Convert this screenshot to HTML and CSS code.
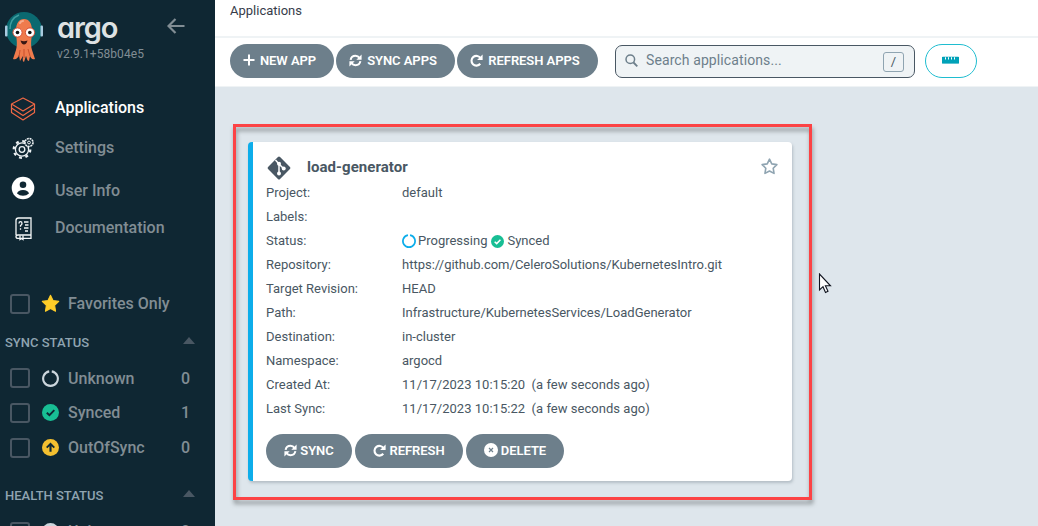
FILE: index.html
```html
<!DOCTYPE html>
<html lang="en">
<head>
<meta charset="utf-8">
<title>Applications - Argo CD</title>
<link rel="stylesheet" href="styles.css">
</head>
<body>
<svg class="defs" width="0" height="0">
  <symbol id="sync" viewBox="0 0 16 16"><g fill="none" stroke="currentColor" stroke-width="2.500"><path d="M2 7.2C2.6 3.8 5 2.2 8 2.2c2.200 0 3.800 1 5 2.700"/><path d="M14 8.800c-.6 3.400-3 5-6 5-2.200 0-3.800-1-5-2.700"/></g><path fill="currentColor" d="M15.500.5v6.500H9zM.5 15.500V9H7z"/></symbol>
  <symbol id="redo" viewBox="0 0 16 16"><path fill="none" stroke="currentColor" stroke-width="2.600" d="M13 5.200A6 6 0 1 0 12.600 12"/><path fill="currentColor" d="M15.500.5v6.800H8.700z"/></symbol>
  <symbol id="check" viewBox="0 0 16 16"><circle cx="8" cy="8" r="8" fill="#18be94"/><path d="M4.500 8.200 7 10.600l4.600-4.800" fill="none" stroke="currentColor" stroke-width="1.800"/></symbol>
  <symbol id="ring" viewBox="0 0 16 16"><path d="M9.200 1.300a6.900 6.900 0 1 1-2.400 0" fill="none" stroke="currentColor" stroke-width="2"/></symbol>
  <symbol id="star" viewBox="0 0 18 18"><path d="M9 1.200l2.400 5 5.400.8-3.900 3.800.9 5.500L9 13.700l-4.800 2.600.9-5.500L1.200 7l5.400-.8z" stroke="currentColor" stroke-linejoin="round"/></symbol>
</svg>
<div class="app">
  <aside class="sidebar">
    <div class="brand">
      <svg class="mascot" width="40" height="52" viewBox="0 0 40 52">
        <circle cx="20" cy="19" r="18" fill="#0b6970"/>
        <rect x="1" y="14.500" width="2.500" height="11" rx="1" fill="#a9cbe0"/><rect x="36.500" y="14.500" width="2.500" height="11" rx="1" fill="#a9cbe0"/>
        <path d="M6 18C6 10 10 6 15 4" fill="none" stroke="#3f9da0" stroke-width="1.500"/>
        <path d="M12 39C14 32 12 27 12 20c0-8 3-12 8-12s8 4 8 12c0 7-2 12 0 19l3 9c-3 1-4-1-5-3l-1 5c-2 0-2-3-3-5l-2 6c-2-1-1-4-1-6l-3 5-1-6c-1 3-3 5-6 4z" fill="#ef7b4d"/>
        <path d="M16 39l-1 7M20 38v9M24 38l2 7" stroke="#c94f2d" fill="none"/>
        <path d="M16 12q1-2 3-2" stroke="#f8ac8c" stroke-width="2" stroke-linecap="round" fill="none"/>
        <circle cx="13.500" cy="21.500" r="4.600" fill="#fff" stroke="#d94e34"/><circle cx="26" cy="21.500" r="4.600" fill="#fff" stroke="#d94e34"/>
        <circle cx="13.500" cy="21.500" r="1.800" fill="#111"/><circle cx="25.800" cy="21.500" r="1.800" fill="#111"/>
        <path d="M16.500 29.500q3.500 1.500 7 0-1 4-3.500 4t-3.500-4z" fill="#391613"/>
      </svg>
      <div class="names"><div class="logo">argo</div><div class="version">v2.9.1+58b04e5</div></div>
      <svg class="back" width="18" height="16" viewBox="0 0 18 16"><path d="M8.500 1 1.500 8l7 7M2 8h15.500" fill="none" stroke="currentColor" stroke-width="2.200"/></svg>
    </div>
    <nav class="nav">
      <a class="item active"><svg width="26" height="26" viewBox="0 0 26 26"><g fill="none" stroke="#ef6845" stroke-width="1.200" stroke-linejoin="round"><path d="M13 3 24.500 9 13 16 1.500 9z"/><path d="M1.500 9v4L13 20.500 24.500 13V9"/><path d="M1.500 13v4.500L13 25l11.500-7.500V13"/></g></svg><span>Applications</span></a>
      <a class="item settings"><svg width="26" height="26" viewBox="0 0 26 26"><g fill="none" stroke="#eef3f5"><circle cx="12" cy="14.500" r="6.600" stroke-width="1.300"/><circle cx="12" cy="14.500" r="8.300" stroke-width="2.200" stroke-dasharray="2.900 3.620"/><circle cx="12" cy="14.500" r="2.800" stroke-width="1.300"/><circle cx="19" cy="7.500" r="4" fill="#0f2733" stroke-width="1.600" stroke-dasharray="2 .7"/><circle cx="19" cy="7.500" r="1.400"/></g></svg><span>Settings</span></a>
      <a class="item user"><svg width="26" height="26" viewBox="0 0 26 26"><circle cx="13" cy="13" r="11.300" fill="#fff"/><circle cx="13" cy="9.800" r="3.300" fill="#0f2733"/><path d="M7 18.500q1-3.600 6-3.600t6 3.600q-2.500 2.300-6 2.300t-6-2.300z" fill="#0f2733"/></svg><span>User Info</span></a>
      <a class="item docs"><svg width="26" height="26" viewBox="0 0 26 26"><g fill="none" stroke="#f4f7f8" stroke-width="1.300"><path d="M6 20V5.500Q6 3 8.500 3H21v17H8q-2 0-2 1.700t2 1.700h13V20"/><path d="M14 7h4.500M15 10h3.500M14 13h4.500M15 16h3"/><path d="M9 8.500q0-1.800 1.500-1.800T12 8.500q0 1.200-1.500 2v1.300M10.500 13.300v1.400"/><path d="M10 20.500v4l1.500-1 1.500 1v-4"/></g></svg><span>Documentation</span></a>
    </nav>
    <div class="filters">
      <label class="filter"><i class="box"></i><svg class="gold" width="19" height="19"><use href="#star" fill="#ffcd28"/></svg><span>Favorites Only</span></label>
      <div class="heading sync">SYNC STATUS<i class="caret"></i></div>
      <label class="filter unknown"><i class="box"></i><svg class="pale" width="17" height="17"><use href="#ring"/></svg><span>Unknown</span><b>0</b></label>
      <label class="filter"><i class="box"></i><svg class="dark" width="17" height="17"><use href="#check"/></svg><span>Synced</span><b>1</b></label>
      <label class="filter"><i class="box"></i><svg width="17" height="17" viewBox="0 0 16 16"><circle cx="8" cy="8" r="8" fill="#f4c030"/><path d="M8 3.200 12.200 7.500 11 8.700 9 6.800V12H7V6.800L5 8.700 3.800 7.500z" fill="#0f2733"/></svg><span>OutOfSync</span><b>0</b></label>
      <div class="heading health">HEALTH STATUS<i class="caret"></i></div>
      <label class="filter last"><i class="box"></i><svg width="17" height="17" viewBox="0 0 16 16"><circle cx="8" cy="8" r="8" fill="#ccd6dd"/></svg><span>Unknown</span><b>0</b></label>
    </div>
  </aside>
  <main class="main">
    <header class="crumbs">Applications</header>
    <div class="toolbar">
      <button class="btn new"><svg width="12" height="12" viewBox="0 0 12 12"><path d="M6 .5v11M.5 6h11" stroke="currentColor" stroke-width="2"/></svg>NEW APP</button>
      <button class="btn syncs"><svg width="13" height="13"><use href="#sync"/></svg>SYNC APPS</button>
      <button class="btn refreshes"><svg width="13" height="13"><use href="#redo"/></svg>REFRESH APPS</button>
      <div class="search"><svg width="13" height="13" viewBox="0 0 13 13"><path d="M8.500 8.500 12.300 12.300" stroke="currentColor" stroke-width="1.800"/><circle cx="5.300" cy="5.300" r="4.300" fill="none" stroke="currentColor" stroke-width="1.500"/></svg><span>Search applications...</span><kbd>/</kbd></div>
      <button class="ruler"><svg width="17" height="8" viewBox="0 0 17 8"><path d="M0 1h3v2.500h1V1h2v2.500h1V1h2v2.500h1V1h2v2.500h1V1h4v6.500H0z" fill="#00a2b8"/><path d="M.5 1h16v6H.5z" fill="none" stroke="#00a2b8" stroke-opacity=".5"/></svg></button>
    </div>
    <section class="canvas">
      <article class="card">
        <div class="title"><svg width="26" height="26" viewBox="0 0 26 26"><rect x="4.500" y="4.500" width="17" height="17" rx="1.500" transform="rotate(45 13 13)" fill="#495763"/><path d="M9.500 5l3.500 4v9M13 9l5 5" stroke="#fff" stroke-width="1.500" fill="none"/><circle cx="13" cy="8.800" r="2" fill="#fff"/><circle cx="13" cy="18.500" r="2" fill="#fff"/><circle cx="17.700" cy="13.500" r="2" fill="#fff"/></svg><h1>load-generator</h1><svg class="fav" width="17" height="17" viewBox="0 0 18 18"><use href="#star" width="18" height="18" fill="none" stroke-width="1.700"/></svg></div>
        <dl class="details">
          <dt>Project:</dt><dd>default</dd>
          <dt>Labels:</dt><dd></dd>
          <dt>Status:</dt><dd class="status"><svg class="blue" width="14" height="14"><use href="#ring"/></svg><span>Progressing</span><svg class="light" width="13" height="13"><use href="#check"/></svg><span>Synced</span></dd>
          <dt>Repository:</dt><dd>https://github.com/CeleroSolutions/KubernetesIntro.git</dd>
          <dt>Target Revision:</dt><dd>HEAD</dd>
          <dt>Path:</dt><dd>Infrastructure/KubernetesServices/LoadGenerator</dd>
          <dt>Destination:</dt><dd>in-cluster</dd>
          <dt>Namespace:</dt><dd>argocd</dd>
          <dt>Created At:</dt><dd class="time">11/17/2023 10:15:20 &nbsp;(a few seconds ago)</dd>
          <dt>Last Sync:</dt><dd class="time">11/17/2023 10:15:22 &nbsp;(a few seconds ago)</dd>
        </dl>
        <div class="actions">
          <button class="btn s"><svg width="13" height="13"><use href="#sync"/></svg>SYNC</button>
          <button class="btn r"><svg width="13" height="13"><use href="#redo"/></svg>REFRESH</button>
          <button class="btn d"><svg width="14" height="14" viewBox="0 0 14 14"><circle cx="7" cy="7" r="7" fill="#fff"/><path d="M5 5l4 4M9 5 5 9" stroke="#6d7f8b" stroke-width="1.200"/></svg>DELETE</button>
        </div>
      </article>
    </section>
  </main>
  <div class="highlight"></div>
  <svg class="cursor" width="14" height="21" viewBox="0 0 14 21"><path d="M1.500 1v16l3.500-3.300L7.500 19.500l2.500-1.300-2.600-5.400H12.500z" fill="#fff" stroke="#10141f" stroke-width="1.100"/></svg>
</div>
</body>
</html>
```

FILE: styles.css
```css
* { box-sizing: border-box; }
body { margin: 0; font-family: Roboto, sans-serif; font-size: 13px; color: #495763; }
svg { flex: none; display: block; }
.defs { position: absolute; }
.app { position: relative; display: flex; width: 1038px; height: 526px; overflow: hidden; }

.sidebar { width: 215px; flex: none; background: #0f2733; color: #818d94; overflow: hidden; }
.brand { height: 88px; display: flex; align-items: flex-start; padding: 11px 0 0 4px; }
.names { width: 104px; margin-left: 13px; }
.logo { height: 36px; font: 600 29px/34px Inter, sans-serif; font-feature-settings: "cv11"; color: #dee2e3; letter-spacing: -1.1px; }
.version { font-size: 12px; line-height: 14px; letter-spacing: .07px; }
.back { margin: 7px 0 0 6px; }
.item { display: flex; align-items: center; height: 40px; padding-left: 10px; font-size: 16px; font-weight: 500; }
.item span { margin-left: 19px; }
.item.active { color: #fff; }
.item.active span, .item.settings span, .item.docs span { margin-top: -2px; }
.item.user span { margin-top: 5px; }
.filters { padding-top: 38px; }
.filter { display: flex; align-items: center; height: 35px; padding: 0 25px 0 10px; font-size: 16px; font-weight: 500; }
.filter.unknown { height: 34px; }
.filter svg { margin: 0 9px 0 12px; }
.filter svg.gold { margin: 0 8px 0 11px; color: #ffcd28; }
.filter b { margin-left: auto; font-weight: 500; }
.box { width: 20px; height: 20px; border: 2px solid #495763; border-radius: 3px; }
.pale { color: #ccd6dd; }
.dark { color: #0f2733; }
.heading { display: flex; justify-content: space-between; align-items: center; padding: 2px 20px 0 5px; color: #8fa4b1; font-weight: 500; }
.heading.sync { height: 40px; }
.heading.health { height: 49px; padding-top: 11px; }
.caret { border: 6px solid transparent; border-top: 0; border-bottom: 7px solid #495763; margin-top: -3px; }

.main { flex: 1; display: flex; flex-direction: column; background: #dee6ec; }
.crumbs { flex: none; height: 38px; border-bottom: 2px solid #eff3f5; background: #fff; padding: 3px 15px; line-height: 16px; color: #363c4a; }
.toolbar { flex: none; display: flex; align-items: flex-start; height: 49px; padding: 6px 15px; background: #fff; border-bottom: 1px solid #eff3f5; }
.btn { display: flex; align-items: center; justify-content: center; height: 34px; padding: 0 0 2px; border: 0; border-radius: 17px; background: #6d7f8b; color: #fff; font: 600 13px Roboto, sans-serif; letter-spacing: -.05px; gap: 5px; }
.toolbar .btn { padding-right: 5px; }
.new { width: 104px; }
.syncs { width: 119px; margin-left: 2px; }
.refreshes { width: 141px; margin-left: 2px; }
.search { display: flex; align-items: center; width: 300px; height: 33px; margin: 1px 0 0 17px; padding: 0 10px 0 9px; border: 1px solid #495763; border-radius: 7px; background: #eff3f5; color: #6d7f8b; font-size: 14px; letter-spacing: .1px; }
.search span { margin: -3px 0 0 8px; }
.search svg { margin-top: -2px; }
.search kbd { width: 21px; height: 20px; margin-left: auto; border: 1px solid #8fa4b1; border-radius: 3px; font: 13px/18px Roboto, sans-serif; text-align: center; color: #495763; }
.ruler { display: flex; align-items: center; justify-content: center; width: 52px; height: 34px; margin-left: 10px; padding: 0 1px 3px 0; border: 1px solid #1fbdd0; border-radius: 17px; background: #fff; }

.canvas { padding: 55px 33px; }
.card { width: 544px; height: 339px; padding: 12px 13px 0; border-left: 5px solid #0dadea; border-radius: 4px; background: #fff; box-shadow: 1px 2px 3px rgba(100, 115, 125, .35); }
.title { display: flex; align-items: center; height: 27px; }
.title h1 { margin: -2px auto 0 15px; font-size: 15px; font-weight: 700; letter-spacing: .05px; }
.fav { color: #8fa4b1; margin: -2px 1px 0 0; }
.details { display: grid; grid-template-columns: 136px 1fr; grid-auto-rows: 24px; margin: 0; line-height: 24px; }
.details dd { margin: 0; white-space: nowrap; }
.details .time { letter-spacing: .03px; }
.details .status { display: flex; align-items: center; }
.status span { margin: 0 4px 0 3px; }
.status .blue { margin: 0 -1px 0 0; }
.blue { color: #0dadea; }
.light { color: #fff; }
.actions { display: flex; gap: 3px; margin-top: 13px; }
.actions .btn { gap: 3px; }
.s { width: 86px; }
.r { width: 108px; }
.d { width: 98px; }

.highlight { position: absolute; left: 233px; top: 124px; width: 579px; height: 376px; border: 3px solid #fc4345; filter: drop-shadow(1px 4px 2px rgba(60, 65, 65, .5)); pointer-events: none; }
.cursor { position: absolute; left: 818px; top: 273px; }
```
